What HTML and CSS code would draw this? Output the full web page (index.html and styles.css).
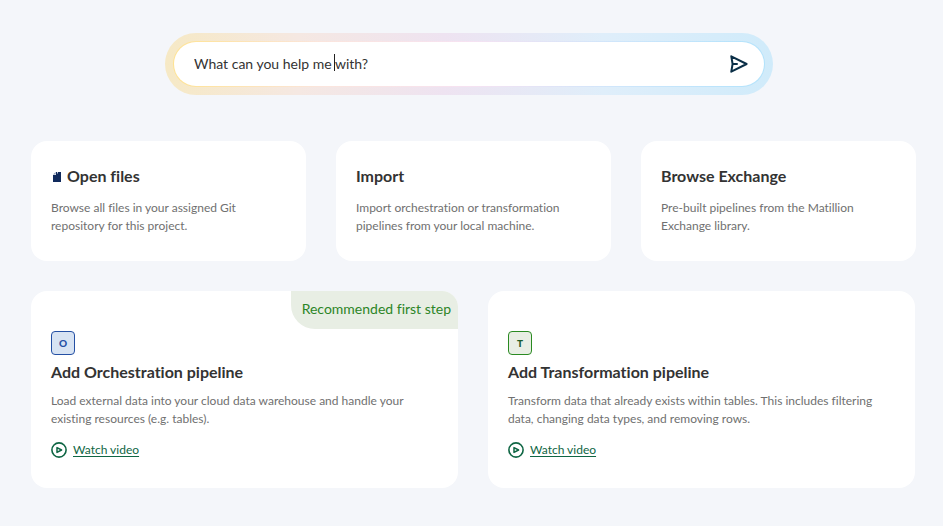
FILE: index.html
```html
<!DOCTYPE html>
<html lang="en">
<head>
<meta charset="utf-8">
<meta name="viewport" content="width=device-width, initial-scale=1">
<title>Pipelines</title>
<link rel="stylesheet" href="styles.css">
</head>
<body>
<main class="page">
  <form class="search">
    <div class="search-field">
      <input class="search-input" type="text" aria-label="Ask a question" value="What can you help me with?">
      <span class="caret"></span>
      <button class="send" type="button" aria-label="Send">
        <svg width="20" height="20" viewBox="0 0 20 20" fill="none" stroke="#0b2f47" stroke-width="2" stroke-linejoin="round" stroke-linecap="round"><path d="M2.3 2.3 17.6 10 2.3 17.7 3.6 10zM3.6 10H8"/></svg>
      </button>
    </div>
  </form>
  <section class="row row-three">
    <article class="card">
      <h2 class="title"><svg class="file-icon" width="8" height="10" viewBox="0 0 8 10"><path fill="#102a5c" d="M3 0h1v1.5h.8V0H8v10H0V3h3z"/><path fill="#8f9db8" d="M0 2.6 2.6 0v2.6z"/></svg>Open files</h2>
      <p class="text">Browse all files in your assigned Git<br>repository for this project.</p>
    </article>
    <article class="card">
      <h2 class="title">Import</h2>
      <p class="text">Import orchestration or transformation<br>pipelines from your local machine.</p>
    </article>
    <article class="card">
      <h2 class="title">Browse Exchange</h2>
      <p class="text">Pre-built pipelines from the Matillion<br>Exchange library.</p>
    </article>
  </section>
  <section class="row row-two">
    <article class="card card-tall">
      <span class="ribbon">Recommended first step</span>
      <span class="badge badge-blue">O</span>
      <h2 class="title">Add Orchestration pipeline</h2>
      <p class="text">Load external data into your cloud data warehouse and handle your<br>existing resources (e.g. tables).</p>
      <a class="video" href="#orchestration"><svg width="16" height="16" viewBox="0 0 16 16" fill="none" stroke="#0f6644" stroke-linejoin="round"><circle cx="8" cy="8" r="7.1" stroke-width="1.6"/><path stroke-width="1.5" d="M6 5.6v4.8L10.6 8z"/></svg><span class="video-label">Watch video</span></a>
    </article>
    <article class="card card-tall">
      <span class="badge badge-green">T</span>
      <h2 class="title">Add Transformation pipeline</h2>
      <p class="text">Transform data that already exists within tables. This includes filtering<br>data, changing data types, and removing rows.</p>
      <a class="video" href="#transformation"><svg width="16" height="16" viewBox="0 0 16 16" fill="none" stroke="#0f6644" stroke-linejoin="round"><circle cx="8" cy="8" r="7.1" stroke-width="1.6"/><path stroke-width="1.5" d="M6 5.6v4.8L10.6 8z"/></svg><span class="video-label">Watch video</span></a>
    </article>
  </section>
</main>
</body>
</html>
```
FILE: styles.css
```css
* { box-sizing: border-box; }
body {
  margin: 0;
  background: #f4f6fa;
  color: #333;
  font-family: Lato, sans-serif;
  font-variant-ligatures: none;
}
.page { padding: 33px 27px 38px 31px; }
.search {
  margin: 0 143px 46px 134px;
  padding: 8px;
  border-radius: 31px;
  background: linear-gradient(90deg, #f6e9c5 0%, #f5e8e2 22%, #eee3f1 46%, #dfeefa 72%, #d0ebfa 100%);
}
.search-field {
  position: relative;
  display: flex;
  align-items: center;
  height: 46px;
  padding: 0 15px 0 20px;
  border: 1px solid transparent;
  border-radius: 23px;
  background:
    linear-gradient(#fff, #fff) padding-box,
    linear-gradient(90deg, #ffe392, #fbe5dd 25%, #f6e2f2 50%, #cfe6fb 75%, #b2e3fc) border-box;
}
.search-input {
  flex: 1;
  min-width: 0;
  padding: 0;
  border: 0;
  outline: 0;
  background: none;
  color: #333;
  font: 14px/20px Lato, sans-serif;
}
.caret {
  position: absolute;
  left: 160px;
  top: 12px;
  width: 1px;
  height: 17px;
  background: #222;
}
.send { display: flex; padding: 0; border: 0; background: none; }
.row { display: grid; gap: 30px; }
.row-three { grid-template-columns: repeat(3, 1fr); margin-bottom: 30px; }
.row-two { grid-template-columns: repeat(2, 1fr); padding-right: 1px; }
.card {
  position: relative;
  padding: 23px 20px 26px;
  border-radius: 16px;
  background: #fff;
}
.card-tall { padding: 40px 20px 29px; overflow: hidden; }
.title { margin: 0; font-size: 16px; line-height: 24px; font-weight: 700; }
.file-icon { margin: 0 6px 0 2px; }
.text { margin: 11px 0 0; color: #707070; font-size: 12px; line-height: 18px; }
.card-tall .text { margin-top: 8px; }
.badge {
  display: flex;
  align-items: center;
  justify-content: center;
  width: 24px;
  height: 24px;
  margin-bottom: 5px;
  border: 1px solid;
  border-radius: 4px;
  font-size: 10px;
  font-weight: 900;
}
.badge-blue { color: #2450a4; background: #d7e3f3; }
.badge-green { color: #1e5c2c; background: #e8eee4; border-color: #2a8a22; }
.ribbon {
  position: absolute;
  top: 0;
  right: 0;
  padding: 8px 7px 10px 11px;
  border-bottom-left-radius: 24px;
  background: #e8eee4;
  color: #2c8527;
  font-size: 14px;
  line-height: 20px;
}
.video {
  display: flex;
  align-items: center;
  gap: 6px;
  width: fit-content;
  margin-top: 13px;
  color: #0f6644;
  font-size: 12px;
  line-height: 18px;
  text-decoration: none;
}
.video-label { text-decoration: underline; text-underline-offset: 2px; }
```
